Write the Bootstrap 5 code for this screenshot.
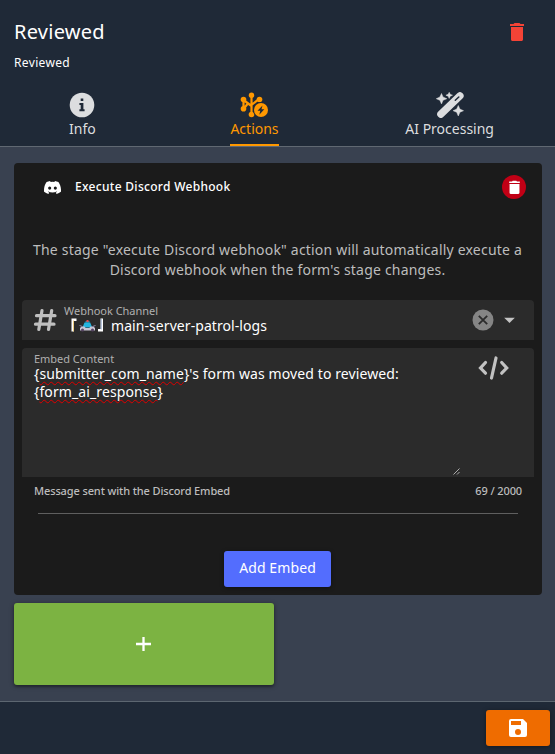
<!DOCTYPE html>
<html lang="en">
<head>
<meta charset="utf-8">
<meta name="viewport" content="width=device-width, initial-scale=1">
<title>Reviewed stage</title>
<link href="https://cdn.jsdelivr.net/npm/bootstrap@5.3.0/dist/css/bootstrap.min.css" rel="stylesheet">
<style>
body{font-family:"Noto Sans","Open Sans",sans-serif;font-size:14px;line-height:20px;background:#394150;color:#fff;height:754px;overflow:hidden}
svg{display:block;flex:none}
.stage-head{background:#1f2937;height:147px;border-bottom:1px solid #606872}
.head-row{padding:16px 26px 0 14px;height:86px}
.stage-title{font-size:20px;line-height:32px;font-weight:400;letter-spacing:.25px}
.stage-sub{font-size:12px;line-height:20px;font-weight:450;letter-spacing:.35px;margin-top:5px}
.bin{margin-top:4px}
.tabs{padding:0 61px 0 69px}
.tab-item{color:#dcdddf;padding-top:6px;gap:1px;border-bottom:2px solid transparent;height:60px}
.tab-item:hover{color:#fff}
.tab-item.current{color:#ff9800;border-color:#ff9800;margin-left:8px}
.action-card{background:#1b1b1b;border-radius:4px;margin:16px 13px 0 14px;height:432px;padding:0 8px}
.card-top{height:48px;padding:0 8px 0 22px;gap:14px}
.card-name{font-size:12px;font-weight:500;letter-spacing:.3px}
.del-round{width:24px;height:24px;background:#c10015;border-radius:50%}
.descr{color:#bdbdbd;height:60px;margin:29px 0 0 -1px;letter-spacing:.2px}
.field-box{background:#2b2b2b;border-radius:4px 4px 0 0}
.field-label{font-size:11px;line-height:14px;color:#b0b0b0;font-weight:450;letter-spacing:-.02px}
.channel{height:40px;padding:0 16px 0 10px}
.channel-text{padding:4px 0 0 6px}
.channel-value{line-height:17px;margin-top:-1px;letter-spacing:.07px}
.embed{height:129px;padding:4px 24px 0 12px;margin-top:8px}
.embed-text{line-height:18px;height:107px;width:427px;letter-spacing:.1px;margin-top:-1px;margin-bottom:1px}
.misspelt{text-decoration:underline wavy #e00000 1px;text-decoration-skip-ink:none;text-underline-offset:2px}
.grip{margin:0 0 1px -9px}
.hint-row{font-size:11px;line-height:14px;color:#bdbdbd;font-weight:500;letter-spacing:-.12px;padding:7px 12px 0;height:36px}
.rule{height:1px;background:#5f5f5f;margin:0 16px}
.btn-embed,.btn-embed:hover{width:107px;height:36px;background:#536dfe;color:#fff;border-radius:3px;font-size:14px;line-height:20px;padding:0 0 2px;border:0;margin:37px 0 0 202px;box-shadow:0 1px 4px #0006;letter-spacing:.1px}
.btn-plus,.btn-plus:hover{width:260px;height:82px;background:#7cb342;border:0;border-radius:3px;margin:8px 14px 0;box-shadow:0 1px 5px #0006,0 2px 2px #0003}
.stage-foot{background:#1f2937;border-top:1px solid #5c6670;height:53px;margin-top:16px;padding:8px 5px 0}
.btn-save,.btn-save:hover{width:64px;height:36px;background:#ef6c00;border:0;border-radius:3px;box-shadow:0 1px 5px #0006}
</style>
<script src="https://cdn.jsdelivr.net/npm/bootstrap@5.3.0/dist/js/bootstrap.bundle.min.js"></script>
</head>
<body>
<header class="stage-head">
  <div class="head-row d-flex justify-content-between">
    <div>
      <h1 class="stage-title mb-0">Reviewed</h1>
      <div class="stage-sub">Reviewed</div>
    </div>
    <svg class="bin" width="24" height="24" viewBox="0 0 24 24" fill="#f44336"><path d="M6 19.500c0 .8.700 1.500 1.500 1.500h9c.8 0 1.500-.7 1.500-1.500V7H6zM19 4h-3.500l-1-1h-5l-1 1H5v2h14z"/></svg>
  </div>
  <nav class="tabs d-flex justify-content-between">
    <a class="tab-item text-decoration-none d-flex flex-column align-items-center">
      <svg width="26" height="26" viewBox="0 0 26 26"><circle cx="13" cy="13" r="12.300" fill="#dcdddf"/><path d="M11.700 6.600h2.600v2.500h-2.600zM10.400 11h4v6.200h1.200v2h-5.200v-2h1.300V13h-1.300z" fill="#1f2937"/></svg>
      <span>Info</span>
    </a>
    <a class="tab-item current text-decoration-none d-flex flex-column align-items-center">
      <svg width="28" height="26" viewBox="0 0 28 26" fill="#ff9800"><g stroke="#ff9800" stroke-width="2.200" fill="none"><path d="M11.500 4v18M3.500 6v11M3.500 8l8 6M19 7l-7.500 6M3.500 17l4-5"/></g><circle cx="11.500" cy="3.300" r="2.700"/><circle cx="3.500" cy="7.500" r="2.800"/><circle cx="19.500" cy="7.500" r="2.800"/><circle cx="3.500" cy="16.700" r="2.800"/><circle cx="11.500" cy="22.500" r="2.800"/><circle cx="21" cy="18" r="8" fill="#1f2937"/><circle cx="21" cy="18" r="7"/><path d="M22.500 13.500l-5 5.200h2.800l-1 4 5-5.400h-2.800z" fill="#1f2937"/></svg>
      <span>Actions</span>
    </a>
    <a class="tab-item text-decoration-none d-flex flex-column align-items-center">
      <svg width="28" height="26" viewBox="0 0 28 26" fill="#dcdddf"><path d="M4.300 22L23.300 3.700" stroke="#dcdddf" stroke-width="7.400" stroke-linecap="round" transform="translate(.6 .2)"/><path d="M19.300 8.300l3.500-3.300" stroke="#1f2937" stroke-width="1.500" stroke-linecap="round"/><path d="M5.500 1.500l1.500 3.500 3.800 1.700-3.800 1.600-1.500 3.600-1.600-3.600L.3 6.700l3.600-1.700zM13.200.3l1 2 2.300.9-2.300 1-1 2.200-1-2.200-2.300-1 2.300-.9zM22.300 13.500l1.600 3.600 3.600 1.600-3.600 1.500-1.600 3.800-1.600-3.800-3.600-1.500 3.600-1.600z" stroke="#dcdddf" stroke-width=".5"/></svg>
      <span>AI Processing</span>
    </a>
  </nav>
</header>
<main>
  <section class="action-card">
    <div class="card-top d-flex align-items-center">
      <svg width="17" height="13" viewBox="0 0 127 97" fill="#fff"><path d="M107.700 8.070A105.150 105.150 0 0 0 81.470 0a72.060 72.060 0 0 0-3.360 6.830 97.680 97.680 0 0 0-29.110 0A72.370 72.370 0 0 0 45.640 0a105.890 105.890 0 0 0-26.250 8.090C2.790 32.650-1.710 56.600.54 80.210a105.730 105.730 0 0 0 32.170 16.150 77.700 77.700 0 0 0 6.890-11.110 68.420 68.420 0 0 1-10.850-5.180l2.660-2a75.570 75.570 0 0 0 64.320 0l2.660 2a68.680 68.680 0 0 1-10.870 5.190 77 77 0 0 0 6.890 11.100 105.250 105.250 0 0 0 32.190-16.140c2.640-27.380-4.510-51.110-18.900-72.150zM42.450 65.690C36.180 65.690 31 60 31 53s5-12.740 11.430-12.740S54 46 53.890 53s-5.050 12.690-11.440 12.690zm42.240 0C78.410 65.690 73.250 60 73.250 53s5-12.740 11.440-12.740S96.230 46 96.120 53s-5.040 12.690-11.430 12.690z"/></svg>
      <span class="card-name flex-grow-1">Execute Discord Webhook</span>
      <span class="del-round d-flex align-items-center justify-content-center"><svg width="17" height="17" viewBox="0 0 24 24" fill="#fff"><path d="M5 19.500c0 1 .7 1.500 1.500 1.500h11c.8 0 1.500-.5 1.500-1.500V7H5zM19.500 3.500h-4l-1-1h-5l-1 1h-4v2.300h15z"/></svg></span>
    </div>
    <p class="descr mb-0 text-center">The stage "execute Discord webhook" action will automatically execute a<br>Discord webhook when the form's stage changes.</p>
    <div class="field-box channel d-flex align-items-center">
      <svg width="26" height="26" viewBox="0 0 26 26" fill="none" stroke="#bfbfbf" stroke-width="3.200" stroke-linecap="round"><path d="M10 3.500L6.800 22.500M19.700 3.500l-3.200 19M4.500 8.700h18.500M3.500 17.200h18.500"/></svg>
      <div class="channel-text flex-grow-1 align-self-start">
        <div class="field-label">Webhook Channel</div>
        <div class="channel-value d-flex align-items-center">
          <svg width="47" height="17" viewBox="0 0 47 17"><path d="M7.500 1.500h5v2.500h-2.500v10.500H7.500z" fill="#fff"/><path d="M9.500 3.500v11" stroke="#e5b84c" stroke-width=".7" fill="none"/><path d="M39 1.500h-2.500v10.500H34v2.500h5z" fill="#fff"/><path d="M37.200 2v10.500" stroke="#5877b4" stroke-width=".6" fill="none"/><path d="M21.500 5.700h4v-1.500h-4zM18.500 10.500l2-5h5.700l2 5z" fill="#25b4df"/><path d="M22.500 3h2v2h-2z" fill="#e34a50"/><path d="M17.500 9.500h3l1.200 1.500h3.600l1.200-1.500h3l1.500 1.500v2.500H16V11z" fill="#c9c6d5"/><path d="M15.500 8.500l3 1M31.500 8.500l-3 1" stroke="#9288a8"/><circle cx="18.500" cy="13" r="1.500" fill="#554461"/><circle cx="28.500" cy="13" r="1.500" fill="#554461"/></svg>
          <span>main-server-patrol-logs</span>
        </div>
      </div>
      <svg width="22" height="22" viewBox="0 0 22 22"><circle cx="11" cy="11" r="10.500" fill="#858585"/><path d="M6.800 6.800l8.400 8.400M15.200 6.800l-8.400 8.400" stroke="#2b2b2b" stroke-width="1.800"/></svg>
      <svg class="ms-2" width="16" height="16" viewBox="0 0 16 16" fill="#c4c4c4"><path d="M2.200 5.700h10.600L7.500 11z"/></svg>
    </div>
    <div class="field-box embed d-flex">
      <div>
        <div class="field-label">Embed Content</div>
        <div class="embed-text">{<span class="misspelt">submitter_com_name</span>}'s form was moved to reviewed:<br>{<span class="misspelt">form_ai_response</span>}</div>
      </div>
      <svg class="grip align-self-end" width="9" height="9" viewBox="0 0 9 9" stroke="#bbb" stroke-width=".9"><path d="M1.500 7.500l6-6M5 7.500L7.500 5"/></svg>
      <svg class="ms-auto" width="32" height="28" viewBox="0 0 32 28" fill="none" stroke="#c2c2c2" stroke-width="3.200" stroke-linecap="round" stroke-linejoin="miter"><path d="M7.500 10.500L2.500 16l5 5.200M23.700 10.500l5 5.500-5 5.200M18 6l-4.500 20"/></svg>
    </div>
    <div class="hint-row d-flex justify-content-between"><span>Message sent with the Discord Embed</span><span>69 / 2000</span></div>
    <div class="rule"></div>
    <button class="btn btn-embed d-block" type="button">Add Embed</button>
  </section>
  <button class="btn btn-plus d-flex align-items-center justify-content-center p-0" type="button" aria-label="Add action">
    <svg width="16" height="16" viewBox="0 0 16 16" stroke="#fff" stroke-width="2.300"><path d="M0 8h15M7.500 1v14"/></svg>
  </button>
</main>
<footer class="stage-foot d-flex justify-content-end">
  <button class="btn btn-save d-flex align-items-center justify-content-center p-0" type="button" aria-label="Save">
    <svg width="24" height="24" viewBox="0 0 24 24" fill="#fff"><path fill-rule="evenodd" d="M17 3H5a2 2 0 0 0-2 2v14a2 2 0 0 0 2 2h14a2 2 0 0 0 2-2V7zM12 19a3 3 0 1 1 0-6 3 3 0 0 1 0 6zM15 9H5V5h10z"/></svg>
  </button>
</footer>
</body>
</html>
